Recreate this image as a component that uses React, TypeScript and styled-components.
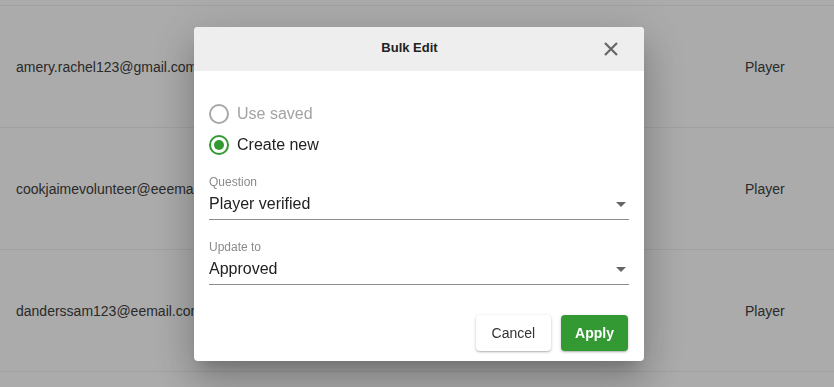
import styled, { createGlobalStyle } from "styled-components";

const GlobalStyle = createGlobalStyle`
  html, body {
    margin: 0;
    padding: 0;
    background: #ffffff;
    font-family: "Liberation Sans", Arial, sans-serif;
    overflow: hidden;
  }
`;

type Member = {
  email: string;
  role: string;
};

const members: Member[] = [
  { email: "amery.rachel123@gmail.com", role: "Player" },
  { email: "cookjaimevolunteer@eeemail.com", role: "Player" },
  { email: "danderssam123@eemail.com", role: "Player" },
];

const Page = styled.div`
  width: 834px;
  height: 387px;
  background: #ffffff;
`;

const Table = styled.div`
  margin-top: 5px;
  border-top: 1px solid #efefef;
`;

const Row = styled.div`
  height: 121px;
  display: flex;
  align-items: center;
  border-bottom: 1px solid #efefef;
  font-size: 14px;
  color: #404040;
`;

const EmailCell = styled.div`
  width: 729px;
  padding-left: 16px;
  white-space: nowrap;
  overflow: hidden;
`;

const RoleCell = styled.div`
  flex: 1;
`;

const Overlay = styled.div`
  position: fixed;
  inset: 0;
  background: rgba(0, 0, 0, 0.33);
  display: flex;
  align-items: center;
  justify-content: center;
`;

const Dialog = styled.div`
  width: 450px;
  margin-left: 4px;
  margin-top: 1px;
  background: #ffffff;
  border-radius: 4px;
  overflow: hidden;
  box-shadow: 0 11px 15px -7px rgba(0, 0, 0, 0.2),
    0 24px 38px 3px rgba(0, 0, 0, 0.14), 0 9px 46px 8px rgba(0, 0, 0, 0.12);
`;

const Header = styled.div`
  height: 44px;
  background: #eeeeee;
  display: flex;
  align-items: center;
  padding: 0 21px 0 26px;
`;

const Title = styled.div`
  flex: 1;
  text-align: center;
  font-size: 13px;
  font-weight: bold;
  color: #222222;
  padding-bottom: 3px;
`;

const CloseButton = styled.button`
  width: 24px;
  height: 24px;
  padding: 0;
  border: none;
  background: transparent;
  display: flex;
  align-items: center;
  justify-content: center;
  cursor: pointer;
  margin-bottom: 1px;
`;

const Body = styled.div`
  padding: 27px 15px 10px 15px;
`;

const RadioRow = styled.label<{ $disabled?: boolean }>`
  height: 31px;
  display: flex;
  align-items: center;
  gap: 8px;
  font-size: 16px;
  color: ${(p) => (p.$disabled ? "#a3a3a3" : "#222222")};
`;

const RadioCircle = styled.span<{ $checked?: boolean; $disabled?: boolean }>`
  width: 20px;
  height: 20px;
  box-sizing: border-box;
  border-radius: 50%;
  border: 2px solid
    ${(p) => (p.$disabled ? "#a8a8a8" : p.$checked ? "#339933" : "#757575")};
  display: flex;
  align-items: center;
  justify-content: center;

  &::after {
    content: "";
    width: 10px;
    height: 10px;
    border-radius: 50%;
    background: #339933;
    display: ${(p) => (p.$checked ? "block" : "none")};
  }
`;

const Field = styled.div<{ $top: number }>`
  margin-top: ${(p) => p.$top}px;
`;

const FieldLabel = styled.div`
  font-size: 12px;
  line-height: 14px;
  color: #8a8a8a;
`;

const SelectBox = styled.div`
  margin-top: 5px;
  padding-bottom: 5px;
  border-bottom: 1px solid #8c8c8c;
  display: flex;
  align-items: center;
  justify-content: space-between;
  font-size: 16px;
  line-height: 20px;
  color: #222222;
`;

const Caret = styled.span`
  width: 0;
  height: 0;
  margin-right: 3px;
  border-left: 5px solid transparent;
  border-right: 5px solid transparent;
  border-top: 5px solid #666666;
`;

const Actions = styled.div`
  margin-top: 30px;
  display: flex;
  justify-content: flex-end;
  gap: 10px;
  padding-right: 1px;
`;

const Button = styled.button<{ $primary?: boolean }>`
  height: 36px;
  padding: 0 ${(p) => (p.$primary ? 14 : 16)}px;
  border: none;
  border-radius: 4px;
  font-family: "Liberation Sans", Arial, sans-serif;
  font-size: 14px;
  font-weight: ${(p) => (p.$primary ? "bold" : "normal")};
  color: ${(p) => (p.$primary ? "#ffffff" : "#333333")};
  background: ${(p) => (p.$primary ? "#339933" : "#ffffff")};
  box-shadow: 0 1px 3px rgba(0, 0, 0, 0.25), 0 1px 1px rgba(0, 0, 0, 0.1);
  cursor: pointer;
`;

const CloseIcon = () => (
  <svg width="14" height="14" viewBox="0 0 14 14">
    <path
      d="M1 1 L13 13 M13 1 L1 13"
      stroke="#666666"
      strokeWidth="2.2"
      strokeLinecap="butt"
    />
  </svg>
);

export default function App() {
  return (
    <Page>
      <GlobalStyle />
      <Table>
        {members.map((m) => (
          <Row key={m.email}>
            <EmailCell>{m.email}</EmailCell>
            <RoleCell>{m.role}</RoleCell>
          </Row>
        ))}
      </Table>

      <Overlay>
        <Dialog>
          <Header>
            <Title>Bulk Edit</Title>
            <CloseButton aria-label="Close">
              <CloseIcon />
            </CloseButton>
          </Header>
          <Body>
            <RadioRow $disabled>
              <RadioCircle $disabled />
              Use saved
            </RadioRow>
            <RadioRow>
              <RadioCircle $checked />
              Create new
            </RadioRow>

            <Field $top={15}>
              <FieldLabel>Question</FieldLabel>
              <SelectBox>
                Player verified
                <Caret />
              </SelectBox>
            </Field>

            <Field $top={20}>
              <FieldLabel>Update to</FieldLabel>
              <SelectBox>
                Approved
                <Caret />
              </SelectBox>
            </Field>

            <Actions>
              <Button>Cancel</Button>
              <Button $primary>Apply</Button>
            </Actions>
          </Body>
        </Dialog>
      </Overlay>
    </Page>
  );
}
